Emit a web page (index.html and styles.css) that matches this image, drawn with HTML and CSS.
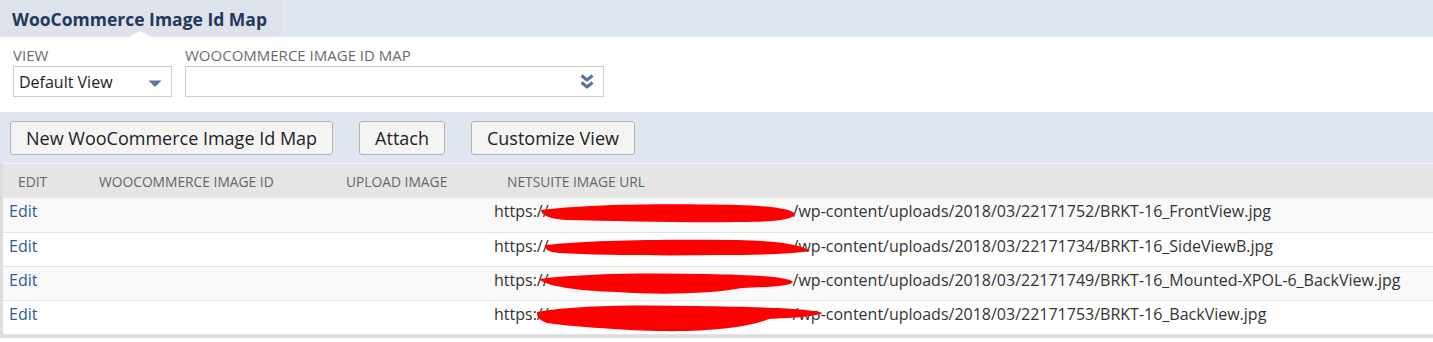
FILE: index.html
```html
<!DOCTYPE html>
<html lang="en">
<head>
    <meta charset="UTF-8">
    <meta name="viewport" content="width=device-width, initial-scale=1.0">
    <title>WooCommerce Image Id Map</title>
    <link rel="stylesheet" href="styles.css">
</head>
<body>
    <header class="page-head">
        <div class="page-tab">
            <h1>WooCommerce Image Id Map</h1>
        </div>
    </header>

    <div class="filters">
        <div class="field">
            <label for="view">View</label>
            <div class="select view-select" id="view">
                <span>Default View</span>
                <svg class="caret" width="14" height="7" viewBox="0 0 14 7"><path d="M0.5 0.5 H13.5 L7.8 6.2 Q7 6.9 6.2 6.2 Z" fill="#5b7497"/></svg>
            </div>
        </div>
        <div class="field">
            <label for="map">WooCommerce Image Id Map</label>
            <div class="select map-select" id="map">
                <span></span>
                <svg class="chevrons" width="14" height="16" viewBox="0 0 14 16"><path d="M1.5 1.5 L7 6 L12.5 1.5 M1.5 8.5 L7 13 L12.5 8.5" fill="none" stroke="#5b7497" stroke-width="3" stroke-linejoin="round"/></svg>
            </div>
        </div>
    </div>

    <div class="toolbar">
        <button type="button">New WooCommerce Image Id Map</button>
        <button type="button">Attach</button>
        <button type="button">Customize View</button>
    </div>

    <div class="list-wrap">
        <table class="list">
            <colgroup>
                <col class="c-edit">
                <col class="c-id">
                <col class="c-upload">
                <col>
            </colgroup>
            <thead>
                <tr>
                    <th>Edit</th>
                    <th>WooCommerce Image Id</th>
                    <th>Upload Image</th>
                    <th>NetSuite Image URL</th>
                </tr>
            </thead>
            <tbody>
                <tr>
                    <td><a href="#">Edit</a></td>
                    <td></td>
                    <td></td>
                    <td class="url">https://<span class="redact"><svg width="300" height="30" viewBox="0 0 300 30"><path d="M4 9 C60 2 150 3 200 4 C235 5 255 8 258 13 C256 19 235 21 205 21 C150 22 80 20 30 19 C12 18 4 14 4 9 Z" fill="#ff0000"/></svg></span>/wp-content/uploads/2018/03/22171752/BRKT-16_FrontView.jpg</td>
                </tr>
                <tr>
                    <td><a href="#">Edit</a></td>
                    <td></td>
                    <td></td>
                    <td class="url">https://<span class="redact"><svg width="300" height="30" viewBox="0 0 300 30"><path d="M8 9 C50 4 130 3 200 4 C245 5 268 10 272 15 C255 18 220 19 180 19 C120 20 60 19 22 17 C10 16 8 13 8 9 Z" fill="#ff0000"/></svg></span>/wp-content/uploads/2018/03/22171734/BRKT-16_SideViewB.jpg</td>
                </tr>
                <tr>
                    <td><a href="#">Edit</a></td>
                    <td></td>
                    <td></td>
                    <td class="url">https://<span class="redact"><svg width="300" height="30" viewBox="0 0 300 30"><path d="M2 9 C50 3 110 3 170 4 C220 5 252 7 256 12 C252 17 225 17 205 18 C175 24 120 25 80 22 C40 21 8 16 2 9 Z" fill="#ff0000"/></svg></span>/wp-content/uploads/2018/03/22171749/BRKT-16_Mounted-XPOL-6_BackView.jpg</td>
                </tr>
                <tr>
                    <td><a href="#">Edit</a></td>
                    <td></td>
                    <td></td>
                    <td class="url">https://<span class="redact"><svg width="300" height="30" viewBox="0 0 300 30"><path d="M0 8 C40 1 100 1 160 2 C220 3 272 4 286 9 C272 14 245 14 232 15 C210 24 170 28 120 27 C80 26 30 22 10 19 C1 16 0 12 0 8 Z" fill="#ff0000"/></svg></span>/wp-content/uploads/2018/03/22171753/BRKT-16_BackView.jpg</td>
                </tr>
            </tbody>
        </table>
    </div>
</body>
</html>
```

FILE: styles.css
```css
/* General Styles */
body {
    font-family: 'Open Sans', sans-serif;
    margin: 0;
    padding: 0;
    background-color: #ffffff;
    color: #333;
}

/* Page title bar */
.page-head {
    height: 37px;
    background-color: #e0e6ef;
}

.page-tab {
    position: relative;
    width: 282px;
    height: 37px;
    background-color: #dde2eb;
}

.page-tab h1 {
    margin: 0;
    padding: 7px 0 0 12px;
    font-size: 17.5px;
    line-height: 24px;
    font-weight: bold;
    color: #24385b;
}

/* little pointer under the tab */
.page-tab::after {
    content: "";
    position: absolute;
    left: 128px;
    bottom: 0;
    border-left: 12px solid transparent;
    border-right: 12px solid transparent;
    border-bottom: 6px solid #ffffff;
}

/* Filters */
.filters {
    display: flex;
    gap: 13px;
    height: 75px;
    padding: 9px 13px 0;
    box-sizing: border-box;
}

.field label {
    display: block;
    font-size: 15px;
    line-height: 18px;
    margin-bottom: 2px;
    color: #6b6b6b;
    text-transform: uppercase;
}

.select {
    display: flex;
    align-items: center;
    justify-content: space-between;
    height: 31px;
    padding: 0 9px 0 5px;
    border: 1px solid #cccccc;
    box-sizing: border-box;
    font-size: 16px;
    color: #222;
}

.view-select {
    width: 159px;
}

.view-select .caret {
    margin-top: 3px;
}

.map-select {
    width: 419px;
}

/* Buttons */
.toolbar {
    display: flex;
    gap: 26px;
    height: 51px;
    padding: 9px 10px 0;
    box-sizing: border-box;
    background-color: #e0e6ef;
}

button {
    height: 34px;
    padding: 0 15px;
    background-color: #f4f4f4;
    border: 1px solid #b3b3b3;
    border-radius: 3px;
    font-family: 'Open Sans', sans-serif;
    font-size: 18px;
    color: #222;
    cursor: pointer;
}

/* List */
.list-wrap {
    border-left: 3px solid #dddddd;
    border-bottom: 3px solid #dddddd;
}

.list {
    width: 100%;
    border-collapse: collapse;
    table-layout: fixed;
}

.c-edit {
    width: 81px;
}

.c-id {
    width: 247px;
}

.c-upload {
    width: 161px;
}

.list th {
    height: 34px;
    padding: 0 0 0 15px;
    background-color: #e5e5e5;
    border-top: 1px solid #f3f5f8;
    font-size: 13.8px;
    font-weight: normal;
    text-align: left;
    text-transform: uppercase;
    color: #666;
}

.list td {
    height: 34px;
    padding: 3px 6px 0;
    box-sizing: border-box;
    vertical-align: top;
    border-bottom: 1px solid #e3e3e3;
    font-size: 16px;
    line-height: 20px;
    white-space: nowrap;
}

.list tbody tr:nth-child(odd) td {
    background-color: #f9f9f9;
}

.list td.url {
    padding-left: 2px;
    color: #333;
}

.list a {
    color: #2c58a0;
    text-decoration: none;
}

/* scribbled-out host name */
.redact {
    position: relative;
    display: inline-block;
    width: 244px;
    height: 20px;
    vertical-align: top;
}

.redact svg {
    position: absolute;
    left: -12px;
    top: 0;
    overflow: visible;
}
```
